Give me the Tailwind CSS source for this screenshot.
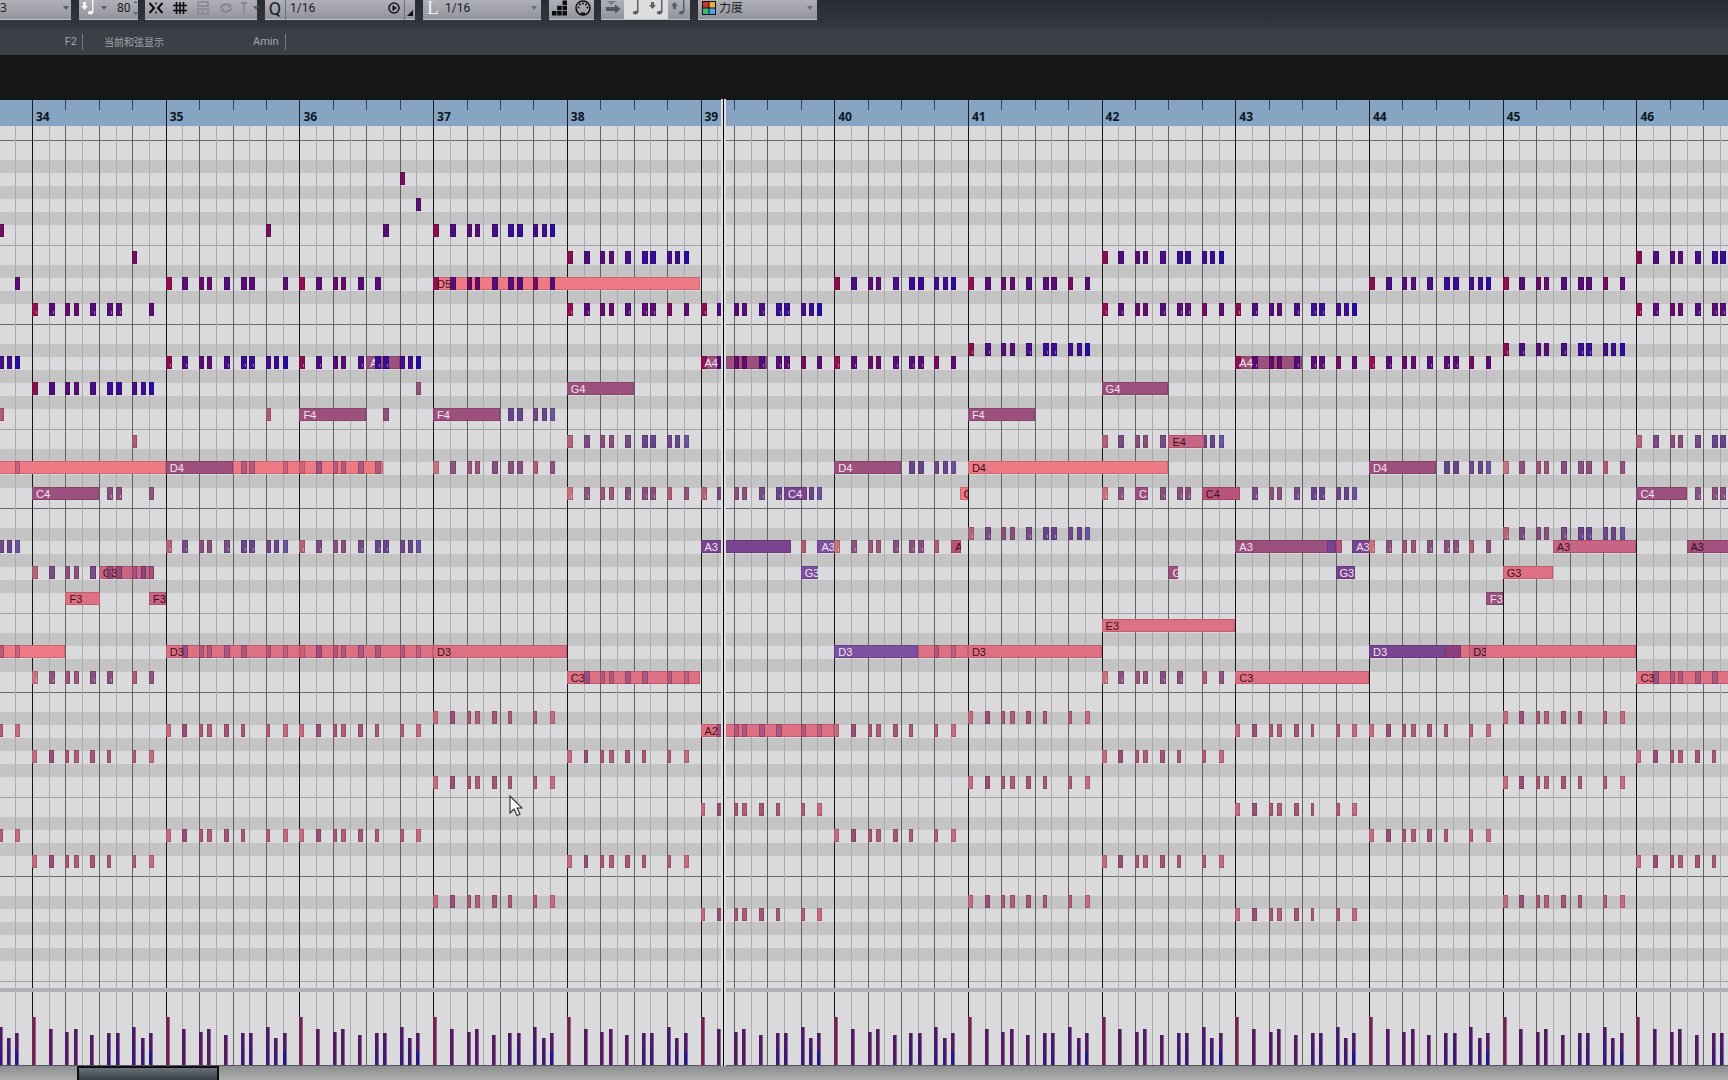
<!DOCTYPE html>
<html lang="zh-CN">
<head>
<meta charset="utf-8">
<title>Key Editor</title>
<script src="https://cdn.jsdelivr.net/npm/@tailwindcss/browser@4"></script>
</head>
<body class="flex h-screen flex-col overflow-hidden bg-[#151716] font-['Open_Sans','Noto_Sans_CJK_SC',sans-serif]">

<header class="flex h-[29px] shrink-0 items-start bg-linear-to-b from-[#292d34] to-[#333841] text-[12px] text-[#1b1c20]">
  <div class="relative flex h-5 w-[71px] items-center border-b border-[#c0c2c8] bg-linear-to-b from-[#b0b1b8] to-[#92949c]">
    <select aria-label="Track" class="h-5 w-full appearance-none pb-1 leading-none outline-none"><option>3</option></select>
    <svg class="pointer-events-none absolute right-0.5 top-1.5 h-1 w-1.5 fill-[#5b5d65]" viewBox="0 0 6 4"><path d="M0 0h6L3 4z"/></svg>
  </div>
  <div class="ml-2 flex h-5 w-[59px] items-center border-b border-[#c0c2c8] bg-linear-to-b from-[#b0b1b8] to-[#92949c] pb-1">
    <button aria-label="Audition velocity" class="flex items-center gap-1 pl-0.5">
      <svg class="h-4 w-4" viewBox="0 0 16 16" fill="#f2f2f5"><path d="M2 2h3v4h2L3.500 10 0 6h2zM11 0h1.500v11.500c0 1.800-1.500 3-3.300 3S6.500 13.500 7 12.300c.6-1.300 2.500-1.900 4-1.300z"/></svg>
      <svg class="h-1 w-1.5 fill-[#5b5d65]" viewBox="0 0 6 4"><path d="M0 0h6L3 4z"/></svg>
    </button>
    <input aria-label="Insert velocity" value="80" class="ml-2.5 h-4 w-4 font-['Roboto'] leading-none outline-none">
    <svg class="h-4 w-1.5 fill-[#5b5d65]" viewBox="0 0 6 16"><path d="M0 2h6L3 0zM0 13h6l-3 3z"/></svg>
  </div>
  <div class="ml-[7px] flex h-5 w-[112px] items-center gap-2.5 border-b border-[#c0c2c8] bg-linear-to-b from-[#b0b1b8] to-[#92949c] pb-1 pl-1">
    <button aria-label="Snap"><svg class="h-3.5 w-3.5" viewBox="0 0 14 14" fill="none" stroke="#0c0c0e" stroke-width="2"><path d="M.5 2 5 7 .5 12M13.500 2 9 7l4.500 5"/><path stroke-width="1.400" d="M7 1.500v2M7 10.500v2"/></svg></button>
    <button aria-label="Grid"><svg class="h-3.5 w-3.5" viewBox="0 0 14 14" fill="none" stroke="#0c0c0e" stroke-width="1.600"><path d="M3.500 1v12M7 1v12M10.500 1v12M0 4.500h14M0 9.500h14"/></svg></button>
    <button aria-label="Grid type" disabled><svg class="h-3.5 w-3" viewBox="0 0 12 14" fill="none" stroke="#85878f" stroke-width="1.500"><path d="M1 1h10v4H1zM1 8h5v5H1zM6 8h5v5H6z"/></svg></button>
    <button aria-label="Quantize link" disabled><svg class="h-3.5 w-3.5" viewBox="0 0 14 14" fill="none" stroke="#85878f" stroke-width="2"><path d="M2 7a5 4 0 0 1 9-2M12 7a5 4 0 0 1-9 2"/><path d="M12 3v3H9M2 11V8h3" stroke-width="1"/></svg></button>
    <button aria-label="Snap options" class="-ml-1 flex items-center gap-1"><svg class="h-3.5 w-2.5" viewBox="0 0 10 14" fill="none" stroke="#85878f" stroke-width="1.500"><path d="M5 3v11"/><path fill="#85878f" stroke="none" d="M1 1h8L5 5z"/></svg><svg class="h-1 w-1.5 fill-[#5b5d65]" viewBox="0 0 6 4"><path d="M0 0h6L3 4z"/></svg></button>
  </div>
  <div class="ml-2 flex h-5 w-[150px] items-center border-b border-[#c0c2c8] bg-linear-to-b from-[#b0b1b8] to-[#92949c] font-['Roboto']">
    <button aria-label="Quantize" class="h-5 w-[21px] border-r border-[#6e7078] pb-1 text-[18px] leading-none">Q</button>
    <select aria-label="Quantize preset" class="h-5 flex-1 appearance-none pb-1 pl-1 text-[12px] leading-none outline-none"><option>1/16</option></select>
    <button aria-label="Apply quantize" class="mr-1 pb-1"><svg class="h-3 w-3" viewBox="0 0 12 12" fill="none" stroke="#15161a" stroke-width="1.500"><circle cx="6" cy="6" r="5"/><path fill="#15161a" stroke="none" d="M4.500 3 9 6 4.500 9z"/></svg></button>
    <button aria-label="Quantize panel" class="flex h-5 w-[11px] items-end justify-center border-l border-[#6e7078] pb-1"><svg class="h-1.5 w-1.5" viewBox="0 0 6 6"><path fill="#0c0c0e" d="M6 0v6H0z"/></svg></button>
  </div>
  <div class="relative ml-2 flex h-5 w-[118px] items-center border-b border-[#c0c2c8] bg-linear-to-b from-[#b0b1b8] to-[#92949c]">
    <label for="len" class="w-[18px] pb-1 pl-1 font-['Liberation_Serif'] text-[19px] leading-none text-[#f2f2f5]">L</label>
    <select id="len" class="h-5 flex-1 appearance-none pb-1 pl-1 font-['Roboto'] text-[12px] leading-none outline-none"><option>1/16</option></select>
    <svg class="pointer-events-none absolute right-1 top-1.5 h-1 w-1.5 fill-[#6b6d75]" viewBox="0 0 6 4"><path d="M0 0h6L3 4z"/></svg>
  </div>
  <div class="ml-2 flex h-5 w-[45px] items-center gap-2 border-b border-[#c0c2c8] bg-linear-to-b from-[#b0b1b8] to-[#92949c] pb-1 pl-[3px]">
    <button aria-label="Step input"><svg class="h-4 w-[15px]" viewBox="0 0 15 16" fill="#0c0c0e"><path d="M0 11h4.500v4.500H0zM5.200 11h4.500v4.500H5.200zM10.500 11H15v4.500h-4.500zM5.200 5.800h4.500v4.500H5.200zM10.500 5.800H15v4.500h-4.500zM10.500.5H15V5h-4.500z"/></svg></button>
    <button aria-label="MIDI input"><svg class="h-4 w-4" viewBox="0 0 16 16"><circle cx="8" cy="8" r="7" fill="none" stroke="#0c0c0e" stroke-width="1.500"/><g fill="#0c0c0e"><circle cx="3.500" cy="7.500" r="1"/><circle cx="5" cy="4.500" r="1"/><circle cx="8" cy="3.500" r="1"/><circle cx="11" cy="4.500" r="1"/><circle cx="12.500" cy="7.500" r="1"/><path d="M6 12.500h4V15H6z"/></g></svg></button>
  </div>
  <div class="ml-[7px] flex h-5 w-[89px] items-stretch border-b border-[#c0c2c8] bg-linear-to-b from-[#b0b1b8] to-[#92949c]">
    <button aria-label="Auto select" class="flex w-[23px] justify-center"><svg class="h-4 w-4" viewBox="0 0 16 16" fill="#54565e"><path fill="#7b7d85" d="M2 1h9L6.500 5z"/><path d="M1 7h9V4.500L15.500 9 10 13.500V11H1z"/></svg></button>
    <button aria-label="Record pitch" class="flex w-[22px] justify-center bg-[#dddde0]"><svg class="h-4 w-4" viewBox="0 0 16 16" fill="#5c5e66"><path d="M10 0h1.500v11.500c0 1.800-1.500 3-3.300 3S5.500 13.500 6 12.300c.6-1.300 2.500-1.900 4-1.300z"/></svg></button>
    <button aria-label="Record note on velocity" class="flex w-[22px] justify-center bg-[#dddde0]"><svg class="h-4 w-4" viewBox="0 0 16 16" fill="#5c5e66"><path d="M2 2h3v3h2L3.500 9 0 5h2zM12 0h1.500v11.500c0 1.800-1.500 3-3.300 3S7.500 13.500 8 12.300c.6-1.300 2.500-1.900 4-1.300z"/></svg></button>
    <button aria-label="Record note off velocity" class="flex w-[22px] justify-center"><svg class="h-4 w-4" viewBox="0 0 16 16" fill="#5c5e66"><path d="M2 9h3V6h2L3.500 2 0 6h2zM12 0h1.500v11.500c0 1.800-1.500 3-3.300 3S7.500 13.500 8 12.300c.6-1.300 2.500-1.900 4-1.300z"/></svg></button>
  </div>
  <div class="relative ml-2 flex h-5 w-[119px] items-center border-b border-[#c0c2c8] bg-linear-to-b from-[#b0b1b8] to-[#92949c] pl-1">
    <svg class="mb-1 h-3.5 w-3.5" viewBox="0 0 14 14"><path fill="#121316" d="M0 0h14v14H0z"/><path fill="#d8302c" d="M1 1h5.500v5.500H1z"/><path fill="#e8b040" d="M7.500 1H13v5.500H7.500z"/><path fill="#3cb878" d="M1 7.500h5.500V13H1z"/><path fill="#48a4ec" d="M7.500 7.500H13V13H7.500z"/></svg>
    <select aria-label="Event colors" class="h-5 flex-1 appearance-none pb-[3px] pl-[3px] text-[12px] leading-none outline-none"><option>力度</option></select>
    <svg class="pointer-events-none absolute right-1 top-1.5 h-1 w-1.5 fill-[#6b6d75]" viewBox="0 0 6 4"><path d="M0 0h6L3 4z"/></svg>
  </div>
</header>

<div class="flex h-[26px] shrink-0 items-center bg-[#3b3f46] text-[11px] text-[#a2a6ad]">
  <span class="w-[83px] border-r border-[#787c83] pr-[5px] text-right font-['Roboto'] leading-4">F2</span>
  <span class="ml-[21px] w-[149px] text-[10px] leading-4">当前和弦显示</span>
  <span class="w-[33px] border-r border-[#787c83] font-['Roboto'] leading-4">Amin</span>
</div>
<div class="h-[44px] shrink-0 bg-[#151716]"></div>

<main class="relative flex min-h-0 flex-1 flex-col overflow-hidden">
  <div id="ruler" class="relative h-[27px] shrink-0 overflow-hidden border-t border-[#10151c] bg-[#87a4c3]"></div>
  <section id="roll" class="relative min-h-0 flex-1 overflow-hidden bg-[#dad9db]">
    <div id="rows" class="flex flex-col"></div>
    <div id="grid" class="absolute inset-0"></div>
    <div id="notes" class="absolute inset-0"></div>
  </section>
  <div class="h-1 shrink-0 bg-[#b0afb4]"></div>
  <section id="lane" class="relative h-[74px] shrink-0 overflow-hidden border-b border-[#55565a] bg-[#dad9db]"></section>
  <div class="h-[14px] shrink-0 bg-linear-to-b from-[#8c8d8f] to-[#adaeb0] pl-[77px]">
    <div class="h-4 w-[142px] border-2 border-[#0c0e12] bg-linear-to-b from-[#6c727a] to-[#3a4048]"></div>
  </div>
  <div id="playhead" class="absolute bottom-[14px] top-0 w-[5px] border-x-2 border-[#dedee0] bg-black"></div>
  <svg class="absolute left-[509px] top-[696px] h-[22px] w-3.5" viewBox="0 0 14 22"><path d="M1 1v17l4-4 3 6.500 3-1.300L8 13h5z" fill="#fff" stroke="#333" stroke-width="1.200"/></svg>
</main>

<script>
const VIEW = 1728, FIRST = 34, ORIGIN = 32, BAR = 133.7;
const pct = px => (px / VIEW * 100) + '%';
const xAt = (bar, step) => ORIGIN + BAR * (bar - FIRST + step / 16);
function add(parent, cls, style, text) {
  const el = document.createElement('div');
  el.className = cls;
  Object.assign(el.style, style || {});
  if (text) el.textContent = text;
  parent.appendChild(el);
  return el;
}
const $ = id => document.getElementById(id);
const ruler = $('ruler'), rows = $('rows'), grid = $('grid'), notes = $('notes'), lane = $('lane');
$('playhead').style.left = pct(721);

// Key rows, one octave at a time from B down to C
add(rows, 'h-[15px] shrink-0 border-b border-[#6a6a6c]');
for (let o = 0; o < 5; o++) {
  ['h-[19px]', 'h-[13px] bg-[#c4c4c5]', 'h-[13px]', 'h-[13px] bg-[#c4c4c5]', 'h-[13px]', 'h-[13px] bg-[#c4c4c5]',
   'h-[21px] border-b border-[#a3a3a5]', 'h-[19px]', 'h-[13px] bg-[#c4c4c5]', 'h-[13px]', 'h-[13px] bg-[#c4c4c5]',
   'h-[21px] border-b border-[#6a6a6c]'].forEach(c => add(rows, c + ' shrink-0'));
}

// Time grid
for (let bar = 33; bar <= 46; bar++) {
  for (let s = 0; s < 16; s += 2) {
    const left = pct(xAt(bar, s));
    const line = s === 0 ? 'w-px bg-[#161616]' : s % 4 === 0 ? 'w-px bg-[#626264]' : 'w-px bg-[#acacae]';
    add(grid, 'absolute inset-y-0 ' + line, { left });
    add(lane, 'absolute inset-y-0 ' + line, { left });
    if (s % 4 === 0) add(ruler, 'absolute top-0 w-px ' + (s ? 'h-2.5 bg-[#34465c]' : 'h-[27px] bg-[#161e28]'), { left });
  }
  if (bar > 33) add(ruler, "absolute top-[9px] pl-1 font-['Open_Sans'] text-[12px] leading-4 font-bold text-[#0c1624]", { left: pct(xAt(bar, 0)) }, String(bar));
}

// Notes
const KEY = { 'A#': 19, A: 32, 'G#': 45, G: 58, 'F#': 71, F: 84, E: 111, 'D#': 124, D: 137, 'C#': 150, C: 163 };
const yOf = p => 14 + (5 - Number(p.slice(-1))) * 184 + KEY[p.slice(0, -1)];
const FULL = [0, 2, 4, 5, 7, 9, 10, 12, 13, 14], NINE = [0, 2, 4, 5, 7, 9, 10, 12, 14];
const EIGHT = [0, 2, 4, 5, 7, 9, 10, 14], SIX = [0, 2, 4, 5, 7, 9], LOW = [0, 2, 4, 5, 7, 9, 12, 14];
const TAIL = [9, 10, 12, 13, 14], END = [12, 13, 14];
const WIDTH = { 0: 6, 2: 6, 4: 5, 5: 5, 7: 6, 9: 6, 10: 6, 12: 5, 13: 5, 14: 5 };
const LOW_WIDTH = { 0: 5, 2: 5, 4: 4, 5: 5, 7: 5, 9: 4, 12: 4, 14: 5 };
const COLORS = {
  cool: { 0: 'bg-[#86104f]', 2: 'bg-[#4a0e80]', 4: 'bg-[#560e74]', 5: 'bg-[#580e72]', 7: 'bg-[#480e84]', 9: 'bg-[#3a0e92]', 10: 'bg-[#3a0e92]', 12: 'bg-[#440e86]', 13: 'bg-[#3e0e8e]', 14: 'bg-[#2a0ca0]' },
  warm: { 0: 'bg-[#921050]', 2: 'bg-[#560e76]', 4: 'bg-[#640e6a]', 5: 'bg-[#640e6a]', 7: 'bg-[#520e7a]', 9: 'bg-[#580e74]', 10: 'bg-[#580e74]', 12: 'bg-[#740e60]', 14: 'bg-[#5a0e72]' },
  fcool: { 0: 'bg-[#b4647a]', 2: 'bg-[#7a4c84]', 4: 'bg-[#8a507c]', 5: 'bg-[#8a507c]', 7: 'bg-[#784c86]', 9: 'bg-[#68468c]', 10: 'bg-[#68468c]', 12: 'bg-[#744888]', 13: 'bg-[#6c468c]', 14: 'bg-[#6c54a0]' },
  fwarm: { 0: 'bg-[#c87480]', 2: 'bg-[#8c547e]', 4: 'bg-[#9a587a]', 5: 'bg-[#9a587a]', 7: 'bg-[#865080]', 9: 'bg-[#8a507e]', 10: 'bg-[#8a507e]', 12: 'bg-[#b05c74]', 14: 'bg-[#90547e]' },
  low: { 0: 'bg-[#c66c80]', 2: 'bg-[#985076]', 4: 'bg-[#a65876]', 5: 'bg-[#b05e78]', 7: 'bg-[#a45676]', 9: 'bg-[#a85a76]', 12: 'bg-[#b05e78]', 14: 'bg-[#c46c80]' },
  over: { 0: 'bg-[#b8506c]/50', 2: 'bg-[#84407c]/70', 4: 'bg-[#984676]/60', 5: 'bg-[#984676]/60', 7: 'bg-[#8c427a]/60', 9: 'bg-[#904478]/60', 10: 'bg-[#904478]/60', 12: 'bg-[#984676]/60', 13: 'bg-[#84407c]/60', 14: 'bg-[#a04c78]/50' }
};
function hits(pitch, bars, steps, pal) {
  const glint = /^(A|C|A#)\d$/.test(pitch) && pal !== 'low' && pal !== 'over';
  for (const bar of bars) for (const s of steps)
    add(notes, 'absolute h-[13px] border border-black/15 ' + COLORS[pal][s] + (glint && WIDTH[s] > 5 ? ' after:absolute after:bottom-px after:right-0 after:h-[3px] after:w-px after:bg-white/40' : ''),
      { left: pct(xAt(bar, s)), top: yOf(pitch) + 'px', width: pct(pal === 'low' ? LOW_WIDTH[s] : WIDTH[s]) });
}
const CORAL = 'bg-[#ee7a86] text-[#3a1018]', ROSE = 'bg-[#de7084] text-[#3a1018]', PINK = 'bg-[#c86484] text-[#3a1018]', DUSK = 'bg-[#b8527a] text-[#3a1018]';
const MAUVE = 'bg-[#9c507e] text-[#f4e4f0]', PURPLE = 'bg-[#784490] text-[#f4e4f0]', VIOLET = 'bg-[#7c52a0] text-[#f4e4f0]';
function hold(pitch, bar, from, to, color, label, over, pal) {
  add(notes, 'absolute h-[13px] border border-black/15 ' + color,
    { left: pct(xAt(bar, from)), top: yOf(pitch) + 'px', width: pct(BAR * (to - from) / 16) });
  if (over) hits(pitch, [bar], over, pal || 'over');
  if (label) add(notes, "absolute h-[13px] overflow-hidden whitespace-nowrap bg-transparent! pl-1 font-['Liberation_Sans'] text-[11px] leading-[15px] " + color,
    { left: pct(xAt(bar, from)), top: yOf(pitch) + 'px', width: pct(BAR * (to - from) / 16) }, label);
}

hits('A5', [36], [12], 'warm');
hits('G5', [36], [14], 'warm');
hits('F5', [33, 35], [12], 'warm'); hits('F5', [36], [10], 'warm'); hits('F5', [37], FULL, 'cool');
hits('E5', [34], [12], 'warm'); hits('E5', [38, 42, 46], FULL, 'cool');
hits('D5', [33], [14], 'warm'); hits('D5', [35], EIGHT, 'warm'); hits('D5', [36], SIX, 'warm');
hold('D5', 37, 0, 32, CORAL, 'D5', NINE, 'warm');
hits('D5', [40, 44], FULL, 'cool'); hits('D5', [41, 45], NINE, 'warm');
hits('C5', [34], EIGHT, 'warm'); hits('C5', [38, 42, 46], NINE, 'warm'); hits('C5', [39, 43], FULL, 'cool');

hits('A#4', [41, 45], FULL, 'cool');
hits('A4', [33], END, 'cool'); hits('A4', [35], FULL, 'cool');
hold('A4', 36, 8, 12, MAUVE, 'A'); hits('A4', [36], FULL, 'cool');
for (const b of [39, 43]) hold('A4', b, 0, 8, MAUVE, 'A4', NINE, 'warm');
hits('A4', [40, 44], NINE, 'warm');
hits('G4', [34], FULL, 'cool'); hits('G4', [36], [14], 'fwarm');
for (const b of [38, 42]) hold('G4', b, 0, 8, MAUVE, 'G4');
hits('F4', [33, 35], [12], 'fwarm'); hits('F4', [36], [10], 'fwarm'); hits('F4', [37], TAIL, 'fcool');
for (const b of [36, 37, 41]) hold('F4', b, 0, 8, MAUVE, 'F4');
hits('E4', [34], [12], 'fwarm'); hits('E4', [38, 42, 46], FULL, 'fcool');
hold('E4', 42, 8, 12.2, PINK, 'E4');
hold('D4', 33, 0, 32, CORAL, '', [14]);
hold('D4', 35, 8, 26, CORAL, '', [9, 10, 14]); hits('D4', [36], SIX, 'over');
hold('D4', 35, 0, 8, MAUVE, 'D4');
hits('D4', [37, 45], NINE, 'fwarm');
for (const b of [40, 44]) { hold('D4', b, 0, 8, MAUVE, 'D4'); hits('D4', [b], TAIL, 'fcool'); }
hold('D4', 41, 0, 24, CORAL, 'D4');
hold('C4', 34, 0, 8, MAUVE, 'C4'); hits('C4', [34], [9, 10, 14], 'fwarm');
hits('C4', [38], NINE, 'fwarm'); hits('C4', [39], [0, 2, 4, 5, 7, 9, 13, 14], 'fcool');
hold('C4', 39, 10, 12.7, PURPLE, 'C4');
hold('C4', 40, 15, 16, CORAL, 'C');
hits('C4', [42], [0, 2, 5, 7, 9, 10], 'fwarm'); hold('C4', 42, 4, 5.6, MAUVE, 'C');
hits('C4', [43], FULL.slice(1), 'fcool'); hold('C4', 42, 12, 16.6, DUSK, 'C4');
hold('C4', 46, 0, 6, MAUVE, 'C4'); hits('C4', [46], [7, 9, 10, 12], 'fwarm');

hits('A#3', [41, 45], FULL, 'fcool');
hits('A3', [33], END, 'fcool'); hits('A3', [35, 36], FULL, 'fcool');
hold('A3', 39, 0, 10.8, PURPLE, 'A3'); hits('A3', [39], [12], 'fwarm');
hits('A3', [40, 44], NINE, 'fwarm');
hold('A3', 39, 14, 16, VIOLET, 'A3');
hold('A3', 40, 14, 15.2, DUSK, 'A');
hold('A3', 43, 12, 12.8, DUSK); hold('A3', 43, 0, 11.1, MAUVE, 'A3'); hold('A3', 43, 11, 12.1, PURPLE);
hold('A3', 43, 14, 16, PURPLE, 'A3');
hold('A3', 45, 6, 16, PINK, 'A3');
hold('A3', 46, 6, 16, 'bg-[#a4507e] text-[#3a1018]', 'A3');
hits('G3', [34], [0, 2, 4, 5, 7], 'fcool');
hold('G3', 34, 8, 14.6, PINK, 'G3', TAIL, 'over'); hits('G3', [34], [9, 10, 13, 14], 'over');
hold('G3', 39, 12, 14.1, VIOLET, 'G3');
hold('G3', 42, 8, 9.1, MAUVE, 'G');
hold('G3', 43, 12, 14.3, PURPLE, 'G3');
hold('G3', 45, 0, 6, ROSE, 'G3');
hold('F3', 34, 4, 8.1, ROSE, 'F3'); hold('F3', 34, 14, 16, PINK, 'F3'); hold('F3', 44, 14, 16, MAUVE, 'F3');
hold('E3', 42, 0, 16, ROSE, 'E3');
hold('D3', 33, 0, 20, CORAL, '', [12, 14]);
hold('D3', 35, 0, 32, ROSE, 'D3', LOW.slice(1)); hits('D3', [36], LOW, 'over');
hold('D3', 37, 0, 16, ROSE, 'D3');
hold('D3', 40, 10, 16, ROSE, '', [12, 14]); hold('D3', 40, 0, 10, VIOLET, 'D3');
hold('D3', 41, 0, 16, ROSE, 'D3');
hold('D3', 44, 10, 32, ROSE); hold('D3', 44, 9, 11, 'bg-[#8c407c]'); hold('D3', 44, 0, 9.2, PURPLE, 'D3');
hold('D3', 44, 12, 14, PINK, 'D3');
hits('C3', [34, 42], LOW, 'fwarm');
hold('C3', 38, 0, 16, ROSE, 'C3', LOW.slice(1));
hold('C3', 43, 0, 16, ROSE, 'C3');
hold('C3', 46, 0, 16, ROSE, 'C3', LOW.slice(1));

hits('A#2', [37, 41, 45], LOW, 'low');
hits('A2', [33], [12, 14], 'low');
hits('A2', [35, 36, 40, 43, 44], LOW, 'low');
hold('A2', 39, 0, 16, ROSE, 'A2', LOW.slice(1));
hits('G2', [34, 38, 42, 46], LOW, 'low');
hits('F2', [37, 41, 45], LOW, 'low');
hits('E2', [39, 43], LOW, 'low');
hits('D2', [33], [12, 14], 'low'); hits('D2', [35, 36, 40, 44], LOW, 'low');
hits('C2', [34, 38, 42, 46], LOW, 'low');
hits('A#1', [37, 41, 45], LOW, 'low');
hits('A1', [39, 43], LOW, 'low');

// Velocity lane
const VEL = { 0: 48, 2: 36, 4: 33, 5: 36, 7: 30, 9: 32, 10: 32, 12: 38, 13: 27, 14: 32 };
for (let bar = 33; bar <= 46; bar++) for (const s of FULL) {
  const c = s === 0 ? 'bg-[#74244c]' : s < 8 ? 'bg-[#501c60]' : s === 14 ? 'bg-linear-to-b from-[#4c1c64] from-50% to-[#20188c] to-60%' : 'bg-linear-to-b from-[#4c1c64] to-[#341878]';
  add(lane, 'absolute bottom-0 w-1 border-r border-[#8a6090] ' + c, { left: pct(xAt(bar, s)), height: VEL[s] + 'px' });
}
</script>
</body>
</html>
